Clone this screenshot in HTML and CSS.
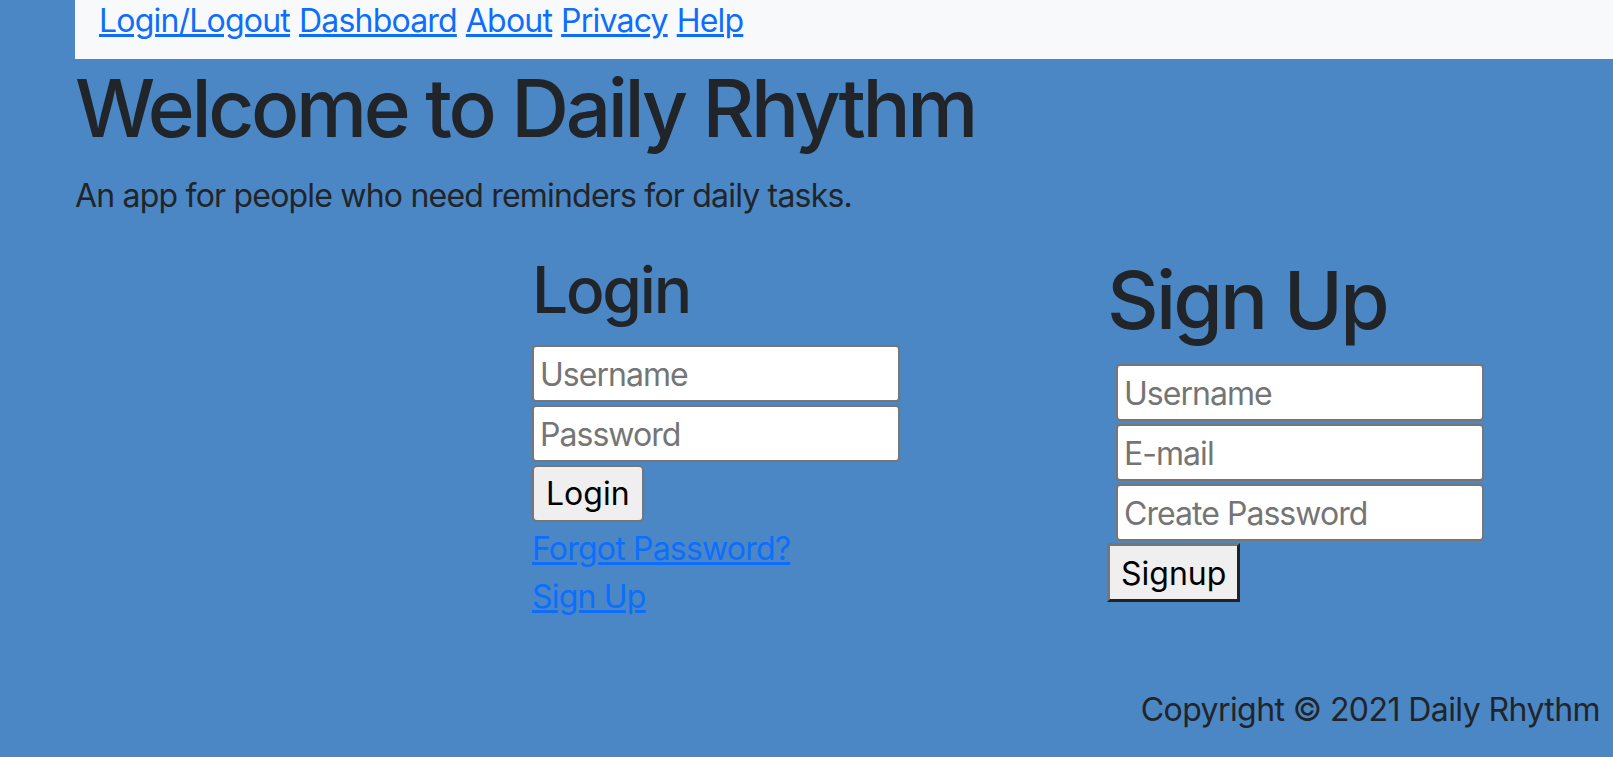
FILE: index.html
```html
<!DOCTYPE html>
<html lang="en">
<head>
<meta charset="utf-8">
<title>Daily Rhythm</title>
<link rel="stylesheet" href="styles.css">
</head>
<body>
<nav class="topnav">
  <a href="#" class="navlink">Login/Logout</a>
  <a href="#" class="navlink">Dashboard</a>
  <a href="#" class="navlink">About</a>
  <a href="#" class="navlink">Privacy</a>
  <a href="#" class="navlink">Help</a>
</nav>
<main class="page">
  <h1 class="title">Welcome to Daily Rhythm</h1>
  <p class="lead">An app for people who need reminders for daily tasks.</p>
  <div class="forms">
    <section class="login">
      <h2 class="login-title">Login</h2>
      <form class="stack">
        <input class="field" type="text" placeholder="Username">
        <input class="field" type="password" placeholder="Password">
        <button class="btn-login" type="button">Login</button>
      </form>
      <div class="links">
        <a href="#" class="textlink">Forgot Password?</a>
        <a href="#" class="textlink">Sign Up</a>
      </div>
    </section>
    <section class="signup">
      <h1 class="signup-title">Sign Up</h1>
      <form class="stack">
        <input class="field indent" type="text" placeholder="Username">
        <input class="field indent" type="email" placeholder="E-mail">
        <input class="field indent" type="password" placeholder="Create Password">
        <button class="btn-signup" type="button">Signup</button>
      </form>
    </section>
  </div>
  <footer class="footer">Copyright © 2021 Daily Rhythm</footer>
</main>
</body>
</html>
```

FILE: styles.css
```css
* { box-sizing: border-box; }

html, body {
  margin: 0;
  padding: 0;
}

body {
  background: #4b87c5;
  color: #212529;
  font-family: Inter, "Liberation Sans", Arial, sans-serif;
  font-size: 32px;
  line-height: 1.5;
  letter-spacing: -0.025em;
  overflow: hidden;
}

.topnav {
  margin-left: 75px;
  background: #f8f9fa;
  height: 59px;
  padding: 2px 0 0 24px;
  line-height: 38px;
  display: flex;
  gap: 9px;
}

.navlink, .textlink {
  color: #0d6efd;
  text-decoration: underline;
  text-underline-offset: 2px;
}

.page {
  padding: 1px 13px 0 75px;
}

.title {
  font-size: 80px;
  font-weight: 500;
  line-height: 1.2;
  letter-spacing: -0.042em;
  margin: 0 0 16px;
}

.lead {
  margin: 0 0 32px;
}

.forms {
  display: grid;
  grid-template-columns: 457px 575px auto;
}

.login { grid-column: 2; }
.signup { grid-column: 3; }

.login-title {
  font-size: 64px;
  font-weight: 500;
  line-height: 1.2;
  letter-spacing: -0.035em;
  margin: 0 0 16px;
}

.signup-title {
  font-size: 80px;
  font-weight: 500;
  line-height: 1.2;
  letter-spacing: -0.035em;
  margin: 0 0 16px;
}

.stack {
  display: flex;
  flex-direction: column;
  align-items: flex-start;
  gap: 3px;
  margin: 0;
}

.field {
  width: 368px;
  height: 57px;
  font: inherit;
  letter-spacing: -0.03em;
  padding: 2px 6px 0;
  border: 2px solid #767676;
  border-radius: 4px;
  background: #fff;
  color: #000;
}

.field::placeholder { color: #757575; opacity: 1; }

.indent { margin-left: 9px; }

.btn-login {
  font: inherit;
  color: #000;
  background: #efefef;
  border: 2px solid #767676;
  border-radius: 5px;
  height: 57px;
  padding: 2px 12px 0;
}

.btn-signup {
  font: inherit;
  color: #000;
  background: #efefef;
  border-style: solid;
  border-width: 3px;
  border-color: #767676 #222 #222 #767676;
  border-radius: 0;
  height: 59px;
  padding: 2px 11px 0;
  margin-top: -1px;
}

.links {
  display: flex;
  flex-direction: column;
  align-items: flex-start;
  margin-top: 3px;
}

.footer {
  text-align: right;
  margin-top: 65px;
  letter-spacing: -0.018em;
}
```
